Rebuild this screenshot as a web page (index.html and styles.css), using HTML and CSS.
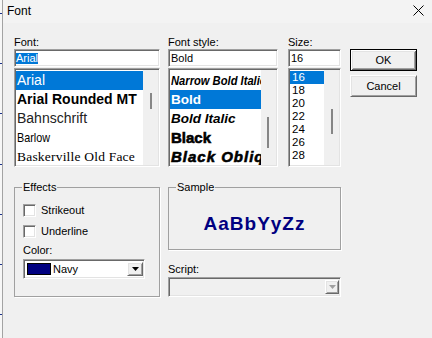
FILE: index.html
```html
<!DOCTYPE html>
<html lang="en">
<head>
  <meta charset="UTF-8">
  <title>Font</title>
  <link rel="stylesheet" href="styles.css">
</head>
<body>
  <div class="screen">
    <div class="edge"></div>
    <div class="dialog">
      <div class="titlebar">
        <span class="title">Font</span>
        <svg class="close" width="11" height="11" viewBox="0 0 11 11">
          <path d="M0.5 0.5L10.5 10.5M10.5 0.5L0.5 10.5" stroke="#000" stroke-width="1" fill="none"/>
        </svg>
      </div>

      <div class="content">
        <div class="top">
          <div class="col col-font">
            <div class="label">Font:</div>
            <div class="edit"><span class="sel">Arial</span></div>
            <div class="list">
              <ul class="items">
                <li class="selected f-arial">Arial</li>
                <li class="f-rounded">Arial Rounded MT</li>
                <li class="f-bahn">Bahnschrift</li>
                <li><span class="f-barlow">Barlow</span></li>
                <li class="f-bask">Baskerville Old Face</li>
              </ul>
              <div class="vscroll"><div class="thumb thumb-font"></div></div>
            </div>
          </div>

          <div class="col col-style">
            <div class="label">Font style:</div>
            <div class="edit"><span class="val">Bold</span></div>
            <div class="list">
              <ul class="items">
                <li><span class="s-narrow">Narrow Bold Italic</span></li>
                <li class="selected s-bold">Bold</li>
                <li class="s-bolditalic">Bold Italic</li>
                <li class="s-black">Black</li>
                <li class="s-blackobl">Black Oblique</li>
              </ul>
              <div class="vscroll"><div class="thumb thumb-style"></div></div>
            </div>
          </div>

          <div class="col col-size">
            <div class="label">Size:</div>
            <div class="edit"><span class="val">16</span></div>
            <div class="list">
              <ul class="items size-items">
                <li class="selected">16</li>
                <li>18</li>
                <li>20</li>
                <li>22</li>
                <li>24</li>
                <li>26</li>
                <li>28</li>
              </ul>
              <div class="vscroll"><div class="thumb thumb-size"></div></div>
            </div>
          </div>

          <div class="col col-buttons">
            <button class="btn btn-default">OK</button>
            <button class="btn">Cancel</button>
          </div>
        </div>

        <div class="bottom">
          <fieldset class="group effects">
            <legend>Effects</legend>
            <div class="check check-first"><span class="box"></span>Strikeout</div>
            <div class="check"><span class="box"></span>Underline</div>
            <div class="label color-label">Color:</div>
            <div class="combo color-combo">
              <span class="swatch"></span>
              <span class="combo-text">Navy</span>
              <span class="drop">
                <svg width="7" height="4" viewBox="0 0 7 4"><path d="M0 0H7L3.5 4Z" fill="#000"/></svg>
              </span>
            </div>
          </fieldset>

          <div class="right">
            <fieldset class="group sample">
              <legend>Sample</legend>
              <div class="sample-text">AaBbYyZz</div>
            </fieldset>
            <div class="label script-label">Script:</div>
            <div class="combo script-combo">
              <span class="drop">
                <svg width="7" height="4" viewBox="0 0 7 4"><path d="M0 0H7L3.5 4Z" fill="#a0a0a0"/></svg>
              </span>
            </div>
          </div>
        </div>
      </div>
    </div>
  </div>
</body>
</html>
```

FILE: styles.css
```css
* {
  box-sizing: border-box;
}
body {
  margin: 0;
  font-family: "Liberation Sans", Arial, sans-serif;
  font-size: 11px;
  color: #000;
  background-color: #f0f0f0;
}
.screen {
  display: flex;
  width: 432px;
  height: 338px;
  overflow: hidden;
}
.edge {
  width: 3px;
  background: repeating-linear-gradient(to bottom, #f7f7f7 0 13px, #1a2f8a 13px 14px, #f7f7f7 14px 50.2px);
  border-right: 1px solid #a3a3a3;
}
.dialog {
  flex: 1;
  background-color: #f0f0f0;
}
.titlebar {
  display: flex;
  justify-content: space-between;
  align-items: flex-start;
  height: 23px;
  padding: 0 8px 0 4px;
  background-color: #f3f3f3;
}
.title {
  margin-top: 4px;
  font-size: 12px;
  line-height: 14px;
}
.close {
  margin-top: 5px;
}
.content {
  padding: 12px 0 0 11px;
}
.top {
  display: flex;
}
.col-font {
  width: 146px;
  margin-right: 8px;
}
.col-style {
  width: 110px;
  margin-right: 10px;
}
.col-size {
  width: 53px;
  margin-right: 9px;
}
.col-buttons {
  width: 67px;
  padding-top: 14px;
}
.label {
  line-height: 14px;
  height: 14px;
}

/* sunken controls */
.edit, .list, .combo, .box {
  border: 1px solid;
  border-color: #a0a0a0 #fff #fff #a0a0a0;
  box-shadow: inset 1px 1px #696969, inset -1px -1px #e3e3e3;
  background-color: #fff;
}
.edit {
  display: flex;
  align-items: center;
  height: 18px;
  padding: 1px 1px 1px 1px;
  white-space: nowrap;
}
.sel {
  display: inline-block;
  height: 11px;
  line-height: 11px;
  background-color: #0078d7;
  color: #fff;
}
.val {
  padding-left: 1px;
}
.list {
  display: flex;
  height: 99px;
  margin-top: 1px;
  padding: 1px;
}
.items {
  flex: 1;
  margin: 0;
  padding: 1px 0 0 0;
  list-style: none;
  overflow: hidden;
}
.items li {
  height: 19px;
  line-height: 19px;
  padding-left: 1px;
  white-space: nowrap;
  overflow: hidden;
}
.items li.selected {
  background-color: #0078d7;
  color: #fff;
}
.vscroll {
  width: 15px;
  background-color: #f0f0f0;
}
.thumb {
  width: 2px;
  margin-left: 7px;
  background-color: #868686;
}
.thumb-font {
  margin-top: 23px;
  height: 16px;
}
.thumb-style {
  margin-top: 47px;
  height: 31px;
  margin-left: 6px;
}
.thumb-size {
  margin-top: 39px;
  height: 25px;
}

/* font names */
.f-arial {
  font-size: 14px;
}
.f-rounded {
  font-size: 14px;
  font-weight: bold;
}
.f-bahn {
  font-size: 14px;
  color: #222;
}
.f-barlow {
  display: inline-block;
  font-size: 13.5px;
  transform: scaleX(0.8);
  transform-origin: left center;
}
.f-bask {
  font-family: "Liberation Serif", "Times New Roman", serif;
  font-size: 13.5px;
  letter-spacing: 0.2px;
}

/* styles */
.s-narrow {
  display: inline-block;
  font-size: 13px;
  font-weight: bold;
  font-style: italic;
  transform: scaleX(0.86);
  transform-origin: left center;
}
.s-bold {
  font-size: 13.5px;
  font-weight: bold;
}
.s-bolditalic {
  font-size: 13.5px;
  font-weight: bold;
  font-style: italic;
}
.s-black {
  font-size: 15px;
  font-weight: bold;
  -webkit-text-stroke: 0.6px #000;
}
.s-blackobl {
  font-size: 15px;
  font-weight: bold;
  font-style: italic;
  letter-spacing: 1px;
  -webkit-text-stroke: 0.6px #000;
}
.size-items li {
  height: 13px;
  line-height: 13px;
  font-size: 11.5px;
  padding-left: 2px;
}

/* buttons */
.btn {
  display: block;
  width: 67px;
  height: 22px;
  margin: 0 0 4px 0;
  padding: 0;
  font-family: inherit;
  font-size: 11px;
  color: #000;
  background-color: #f0f0f0;
  border: 1px solid;
  border-color: #fff #696969 #696969 #fff;
  box-shadow: inset 1px 1px #e3e3e3, inset -1px -1px #a0a0a0;
}
.btn-default {
  border: 1px solid #000;
  box-shadow: inset 1px 1px #fff, inset -1px -1px #696969, inset 2px 2px #e3e3e3, inset -2px -2px #a0a0a0;
}

/* bottom */
.bottom {
  display: flex;
  margin-top: 14px;
}
.group {
  margin: 0;
  min-width: 0;
  border: 1px solid #a0a0a0;
  box-shadow: 1px 1px 0 #fff;
}
.group legend {
  padding: 0 1px;
  margin-left: -1px;
  line-height: 13px;
}
.effects {
  width: 146px;
  margin-right: 8px;
  padding: 10px 8px 17px 8px;
}
.check {
  display: flex;
  align-items: center;
  height: 13px;
  line-height: 13px;
  margin-bottom: 8px;
}
.check + .check {
  margin-bottom: 6px;
}
.box {
  width: 13px;
  height: 13px;
  margin-right: 5px;
}
.color-label {
  height: 13px;
  line-height: 13px;
}
.combo {
  display: flex;
  align-items: center;
  height: 20px;
  padding: 1px;
}
.color-combo {
  width: 122px;
  margin-top: 2px;
}
.swatch {
  width: 24px;
  height: 12px;
  margin-left: 2px;
  background-color: #000080;
  border: 1px solid #000;
}
.combo-text {
  flex: 1;
  margin-left: 2px;
}
.drop {
  display: flex;
  align-items: center;
  justify-content: center;
  width: 16px;
  height: 14px;
  background-color: #f0f0f0;
  border: 1px solid;
  border-color: #fff #696969 #696969 #fff;
  box-shadow: inset 1px 1px #e3e3e3, inset -1px -1px #a0a0a0;
}
.right {
  width: 173px;
}
.sample {
  padding: 20px 8px 16px 8px;
}
.sample-text {
  height: 19px;
  line-height: 19px;
  text-align: center;
  font-size: 19px;
  font-weight: bold;
  letter-spacing: 1px;
  color: #000080;
}
.script-label {
  margin-top: 13px;
  height: 13px;
  line-height: 13px;
}
.script-combo {
  margin-top: 1px;
  justify-content: flex-end;
  background-color: #f0f0f0;
}
.script-combo .drop {
  width: 14px;
}
```
